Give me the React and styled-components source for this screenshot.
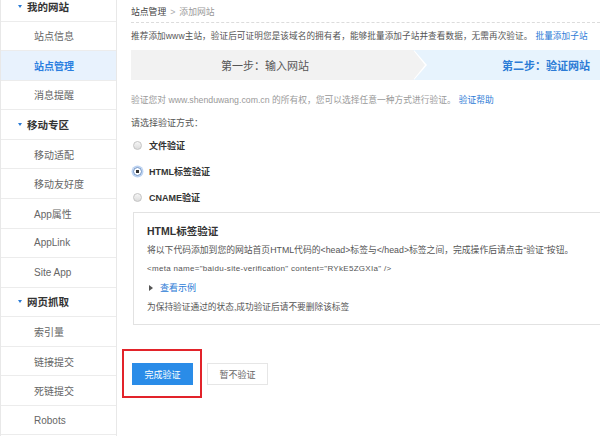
import styled, { createGlobalStyle } from "styled-components";

const GlobalStyle = createGlobalStyle`
  html, body {
    margin: 0;
    padding: 0;
    background: #fff;
    overflow: hidden;
  }
  body {
    font-family: "Liberation Sans", "Noto Sans CJK SC", sans-serif;
    color: #555;
  }
`;

const menu = [
  { title: "我的网站", items: ["站点信息", "站点管理", "消息提醒"] },
  { title: "移动专区", items: ["移动适配", "移动友好度", "App属性", "AppLink", "Site App"] },
  { title: "网页抓取", items: ["索引量", "链接提交", "死链提交", "Robots"] },
];

const methods = [
  { label: "文件验证", checked: false },
  { label: "HTML标签验证", checked: true },
  { label: "CNAME验证", checked: false },
];

function App() {
  return (
    <>
      <GlobalStyle />
      <Page>
        <Sidebar>
          {menu.map((group) => (
            <div key={group.title}>
              <GroupTitle>
                <Caret />
                {group.title}
              </GroupTitle>
              {group.items.map((item) => (
                <MenuItem key={item} active={item === "站点管理"}>
                  {item}
                </MenuItem>
              ))}
            </div>
          ))}
        </Sidebar>

        <Main>
          <Crumbs>
            <b>站点管理</b>
            <span className="sep">&gt;</span>
            <span className="cur">添加网站</span>
          </Crumbs>

          <Tip>
            推荐添加www主站，验证后可证明您是该域名的拥有者，能够批量添加子站并查看数据，无需再次验证。
            <Link>批量添加子站</Link>
          </Tip>

          <Steps>
            <StepOne>第一步：输入网站</StepOne>
            <StepTwo>第二步：验证网站</StepTwo>
          </Steps>

          <Note>
            验证您对 www.shenduwang.com.cn 的所有权，您可以选择任意一种方式进行验证。
            <Link>验证帮助</Link>
          </Note>

          <Choose>请选择验证方式：</Choose>

          <Methods>
            {methods.map((m) => (
              <Method key={m.label}>
                <Radio checked={m.checked} />
                {m.label}
              </Method>
            ))}
          </Methods>

          <Box>
            <BoxTitle>HTML标签验证</BoxTitle>
            <BoxLine size="8.8px">
              将以下代码添加到您的网站首页HTML代码的&lt;head&gt;标签与&lt;/head&gt;标签之间，完成操作后请点击“验证”按钮。
            </BoxLine>
            <BoxLine size="8px" spacing="0.3px">
              &lt;meta name="baidu-site-verification" content="RYkE5ZGXIa" /&gt;
            </BoxLine>
            <BoxLine>
              <Toggle />
              <Link>查看示例</Link>
            </BoxLine>
            <BoxLine size="8.7px">为保持验证通过的状态,成功验证后请不要删除该标签</BoxLine>
          </Box>

          <Actions>
            <Marked>
              <Button primary>完成验证</Button>
            </Marked>
            <Button>暂不验证</Button>
          </Actions>
        </Main>
      </Page>
    </>
  );
}

const Page = styled.div`
  display: flex;
  width: 600px;
  height: 436px;
  overflow: hidden;
`;

const Sidebar = styled.div`
  width: 115px;
  flex-shrink: 0;
  margin-top: -8px;
  border-left: 1px solid #e8e8e8;
  border-right: 1px solid #e8e8e8;
`;

const Row = styled.div`
  box-sizing: border-box;
  height: 29.57px;
  display: flex;
  align-items: center;
  border-bottom: 1px solid #ececec;
`;

const GroupTitle = styled(Row)`
  padding-left: 17px;
  font-size: 10.5px;
  font-weight: bold;
  color: #333;
`;

const Caret = styled.span`
  width: 0;
  height: 0;
  border-left: 2.5px solid transparent;
  border-right: 2.5px solid transparent;
  border-top: 3px solid #2b7bd6;
  margin-right: 5px;
`;

const MenuItem = styled(Row)`
  padding-left: 33px;
  font-size: 10px;
  color: ${(p) => (p.active ? "#2a7ee0" : "#666")};
  font-weight: ${(p) => (p.active ? "bold" : "normal")};
  background: ${(p) => (p.active ? "#e8f2fd" : "transparent")};
`;

const Main = styled.div`
  flex: 1;
  min-width: 0;
  padding-left: 14px;
  font-size: 9px;
`;

const Crumbs = styled.div`
  height: 22px;
  line-height: 24px;
  border-bottom: 1px dashed #dcdcdc;
  font-size: 8.8px;
  color: #999;
  b {
    font-weight: normal;
    color: #444;
  }
  .sep {
    margin: 0 4px;
    color: #aaa;
  }
`;

const Tip = styled.div`
  margin-top: 4px;
  line-height: 18px;
  font-size: 8.6px;
  letter-spacing: 0.1px;
  color: #555;
  white-space: nowrap;
`;

const Link = styled.a`
  color: #2b7bd6;
  margin-left: 3px;
  cursor: pointer;
`;

const Steps = styled.div`
  margin-top: 5px;
  height: 30px;
  display: flex;
  background: #e7f3fd;
`;

const StepOne = styled.div`
  position: relative;
  width: 282px;
  box-sizing: border-box;
  padding-left: 90px;
  line-height: 32px;
  font-size: 11px;
  color: #555;
  background: #f2f2f2;
  &::before,
  &::after {
    content: "";
    position: absolute;
    top: 0;
    width: 0;
    height: 0;
    border-top: 15px solid transparent;
    border-bottom: 15px solid transparent;
  }
  &::before {
    right: -14px;
    border-left: 13px solid #fff;
  }
  &::after {
    right: -12px;
    border-left: 12px solid #f2f2f2;
  }
`;

const StepTwo = styled.div`
  flex: 1;
  text-align: right;
  padding-right: 10px;
  line-height: 32px;
  font-size: 11px;
  font-weight: bold;
  color: #2b7bd6;
`;

const Note = styled.div`
  margin-top: 11px;
  line-height: 18px;
  font-size: 8.75px;
  color: #999;
`;

const Choose = styled.div`
  margin-top: 5px;
  line-height: 18px;
  color: #555;
`;

const Methods = styled.div`
  display: flex;
  flex-direction: column;
`;

const Method = styled.label`
  height: 26px;
  display: flex;
  align-items: center;
  font-weight: bold;
  color: #333;
`;

const Radio = styled.span`
  box-sizing: border-box;
  width: 9px;
  height: 9px;
  margin: 0 7px 0 2px;
  border-radius: 50%;
  border: 1px solid ${(p) => (p.checked ? "#6a8fc4" : "#c4c4c4")};
  background: ${(p) =>
    p.checked
      ? "radial-gradient(circle, #333 0 1.6px, #fff 2px)"
      : "linear-gradient(#f6f6f6, #dcdcdc)"};
  box-shadow: ${(p) => (p.checked ? "0 0 0 1.5px #bcd3f2" : "none")};
`;

const Box = styled.div`
  margin: 2px 0 0 2px;
  width: calc(100% + 10px);
  box-sizing: border-box;
  border: 1px solid #e2e2e2;
  padding: 9px 0 8px 13px;
`;

const BoxTitle = styled.div`
  line-height: 18px;
  font-size: 10.5px;
  font-weight: bold;
  color: #333;
`;

const BoxLine = styled.div`
  display: flex;
  align-items: center;
  height: 19px;
  font-size: ${(p) => p.size || "9px"};
  letter-spacing: ${(p) => p.spacing || "normal"};
  color: #555;
  white-space: nowrap;
`;

const Toggle = styled.span`
  width: 0;
  height: 0;
  margin: 0 4px 0 2px;
  border-top: 3px solid transparent;
  border-bottom: 3px solid transparent;
  border-left: 4px solid #555;
`;

const Actions = styled.div`
  margin-top: 38px;
  display: flex;
  gap: 14px;
  padding-left: 1px;
`;

const Marked = styled.div`
  position: relative;
  &::after {
    content: "";
    position: absolute;
    left: -10px;
    top: -14px;
    width: 80px;
    height: 49px;
    box-sizing: border-box;
    border: 2px solid #e2232a;
  }
`;

const Button = styled.button`
  width: 61px;
  height: 22px;
  padding: 0;
  font-family: inherit;
  font-size: 9px;
  cursor: pointer;
  border: 1px solid ${(p) => (p.primary ? "#2a8ce8" : "#e6e6e6")};
  background: ${(p) => (p.primary ? "#2a8ce8" : "#fff")};
  color: ${(p) => (p.primary ? "#fff" : "#666")};
`;

export default App;
